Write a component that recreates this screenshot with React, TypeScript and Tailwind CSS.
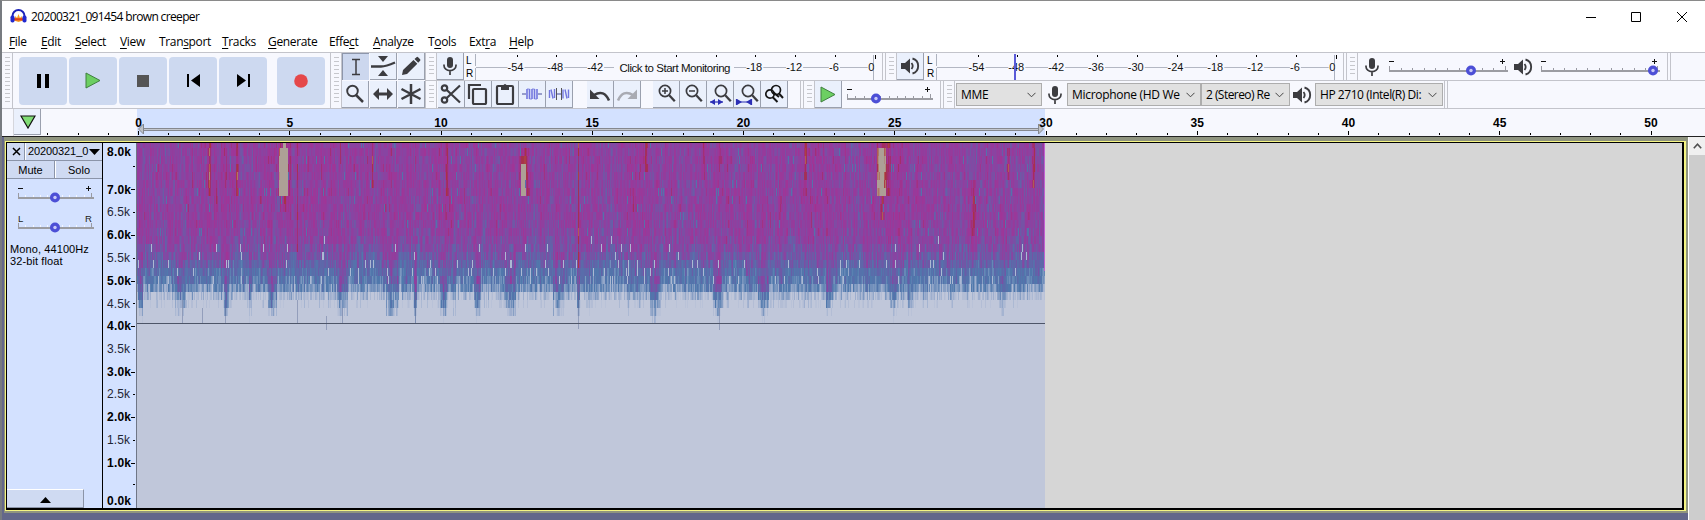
import React from "react";

const SEGOE = "font-['Open_Sans','Noto_Sans',sans-serif]";
const ARIAL = "font-['Liberation_Sans',Arial,sans-serif]";

const INK = "#3c3c40";

/* ---------- small parts ---------- */

function Grip({ className = "h-7" }: { className?: string }) {
  return (
    <div className={`flex w-[11px] shrink-0 justify-center border-r border-[#c3c4cb] py-[4px] ${className}`}>
      <div className="h-full w-[5px] bg-[repeating-linear-gradient(to_bottom,#c6c7cc_0px,#c6c7cc_1px,transparent_1px,transparent_4px)]" />
    </div>
  );
}

function ToolButton({ children, pressed = false, w = "w-[27px]" }: { children: React.ReactNode; pressed?: boolean; w?: string }) {
  return (
    <button
      className={`flex h-[27px] shrink-0 items-center justify-center ${w} ${
        pressed
          ? "border-t border-l border-[#8d96ab] bg-[#ccd7ee]"
          : "border-r border-b border-r-[#9aa0ae] border-b-[#9aa0ae] bg-[#eaf0fc]"
      }`}
    >
      {children}
    </button>
  );
}

function BigButton({ children, className = "" }: { children: React.ReactNode; className?: string }) {
  return (
    <button className={`flex h-12 w-12 shrink-0 items-center justify-center rounded-[4px] bg-[#cdd9f0] ${className}`}>{children}</button>
  );
}

function Mic() {
  return (
    <svg width="16" height="20" viewBox="0 0 16 20" fill="none" stroke={INK}>
      <rect x="5" y="1" width="6" height="11" rx="3" fill={INK} stroke="none" />
      <path d="M2 8.5v1a6 5.2 0 0 0 12 0v-1M8 15v4" strokeWidth="1.7" />
    </svg>
  );
}

function Speaker() {
  return (
    <svg width="20" height="20" viewBox="0 0 20 20" fill="none" stroke={INK}>
      <path d="M1 7h4l5-4.5v15L5 13H1z" fill={INK} stroke="none" />
      <path d="M11.5 7q2.4 3 0 6" strokeWidth="1.8" />
      <path d="M12.5 2.5a7.8 7.8 0 0 1 0 15" strokeWidth="1.9" />
    </svg>
  );
}

function Knob({ x, y }: { x: number; y: number }) {
  return (
    <g>
      <circle cx={x} cy={y} r="5" fill="#4c4fd6" />
      <circle cx={x} cy={y} r="1.7" fill="#c8c9f8" />
    </g>
  );
}

function Slider({ w, pos, ticks, left = "-", right = "+", light = false }: { w: number; pos: number; ticks: number; left?: string; right?: string; light?: boolean }) {
  const step = (w - 3) / ticks;
  return (
    <svg width={w} height="28" className={ARIAL}>
      {left === "-" ? <path d="M0 8.5h5" stroke="#111" /> : <text x="0" y="12" fontSize="9.5" fill="#222">{left}</text>}
      {right === "+" ? (
        <path d={`M${w - 8} 8.5h5M${w - 5.5} 6v5`} stroke="#111" />
      ) : (
        <text x={w - 9} y="12" fontSize="9.5" fill="#222">{right}</text>
      )}
      {Array.from({ length: ticks + 1 }, (_, i) => {
        const end = i === 0 || i === ticks;
        return <rect key={i} x={Math.round(i * step)} y={end ? 13 : 15} width="1" height={end ? 5 : 3} fill={light && !end ? "#f4f7ff" : "#999aa2"} />;
      })}
      <rect x="0" y="17" width={w} height="2" fill="#9b9ca2" />
      <Knob x={pos} y={17.5} />
    </svg>
  );
}

function LR() {
  return (
    <div className={`flex h-7 w-[9px] shrink-0 flex-col justify-between py-px text-[10px] leading-[13px] text-black ${ARIAL}`}>
      <span>L</span>
      <span>R</span>
    </div>
  );
}

function Meter({ message, peak }: { message?: string; peak?: number }) {
  const vals = [-54, -48, -42, -36, -30, -24, -18, -12, -6, 0];
  const hidden = (v: number) => !!message && v > -42 && v < -18;
  const xs = vals.map((_, i) => 41.5 + i * 39.8);
  const segs: string[] = [];
  let start = 1;
  xs.forEach((x, i) => {
    if (hidden(vals[i])) return;
    const half = i === 9 ? 7 : i === 8 ? 6 : 9;
    if (message && vals[i] === -18) start = 259;
    segs.push(`M${start} 14.5H${x - half}`);
    start = x + half - 1;
    if (message && vals[i] === -42) segs.push(`M${start} 14.5H139`);
  });
  return (
    <svg width="404" height="28" className={`shrink-0 ${ARIAL}`}>
      <path d="M.5 1v12M.5 15v12M398.5 2v11M398.5 15v12" stroke="#aeb3bf" />
      <path d={segs.join("")} stroke="#b3b7c3" />
      {vals.map((v, i) => (
        <g key={v}>
          <rect x={Math.round(xs[i])} y="2" width="1" height={v === 0 ? 4 : 2} fill="#000" />
          {!hidden(v) && (
            <text x={v === 0 ? xs[i] - 3.5 : xs[i] - 1} y="18" fontSize="11" textAnchor="middle" fill="#111">{v}</text>
          )}
        </g>
      ))}
      {message && (
        <text x="200" y="19" fontSize="11.5" textAnchor="middle" textLength="111" fill="#111">{message}</text>
      )}
      {peak !== undefined && <rect x={peak} y="1" width="2" height="26" fill="#5a5ad8" />}
    </svg>
  );
}

function Combo({ label, className }: { label: string; className: string }) {
  return (
    <div className={`flex h-[23px] shrink-0 items-center justify-between border border-[#adadad] bg-[#e1e1e1] pl-[4px] pr-[5px] text-black ${SEGOE} ${className}`}>
      <span className="whitespace-nowrap">{label}</span>
      <svg width="9" height="6" viewBox="0 0 9 6" className="shrink-0">
        <path d="M.5.8l4 4 4-4" fill="none" stroke="#444" />
      </svg>
    </div>
  );
}

function Lens({ children, cx = 11, cy = 9 }: { children?: React.ReactNode; cx?: number; cy?: number }) {
  return (
    <svg width="24" height="24" viewBox="0 0 24 24" fill="none" stroke={INK}>
      <circle cx={cx} cy={cy} r="5.6" strokeWidth="1.7" />
      <path d={`M${cx + 4.2} ${cy + 4.2}l5.6 6`} strokeWidth="2.3" />
      {children}
    </svg>
  );
}

const End = () => <div className="h-7 w-[4px] shrink-0 border-x border-[#c3c4cb]" />;

/* ---------- chrome ---------- */

const menus: [string, number, string][] = [
  ["File", 0, "w-8"],
  ["Edit", 0, "w-[34px]"],
  ["Select", 0, "w-[45px]"],
  ["View", 0, "w-[39px]"],
  ["Transport", 4, "w-[63px]"],
  ["Tracks", 0, "w-[46px]"],
  ["Generate", 0, "w-[61px]"],
  ["Effect", 4, "w-11"],
  ["Analyze", 0, "w-[55px]"],
  ["Tools", 1, "w-[41px]"],
  ["Extra", 3, "w-10"],
  ["Help", 0, "w-10"],
];

function TitleBar() {
  return (
    <div className="flex h-[31px] shrink-0 items-center bg-white pl-[8px]">
      <svg width="17" height="17" viewBox="0 0 17 17">
        <path d="M4 12.5L5.5 8 7 10l1.5-4L10 10l1.5-2L13 12.5 8.5 14z" fill="#f5a023" />
        <path d="M4 11.3h9" stroke="#e2401c" strokeWidth="2.2" />
        <path d="M2.5 10V8a6 6 0 0 1 12 0v2" fill="none" stroke="#1b22b8" strokeWidth="2" />
        <rect x="0.5" y="7.5" width="4" height="7" rx="1.8" fill="#2229cf" />
        <rect x="12.5" y="7.5" width="4" height="7" rx="1.8" fill="#2229cf" />
      </svg>
      <span className={`ml-[4px] whitespace-nowrap text-[12px] tracking-[-0.64px] text-black ${SEGOE}`}>20200321_091454 brown creeper</span>
      <svg width="120" height="14" viewBox="0 0 120 14" className="ml-auto mr-[5px]" fill="none" stroke="#000">
        <path d="M6 7.5h10M51.5 2.5h9v9h-9zM97 2l10 10M107 2L97 12" />
      </svg>
    </div>
  );
}

function MenuBar() {
  return (
    <div className={`flex h-5 shrink-0 items-center bg-white pl-[7px] text-[12px] leading-5 tracking-[-0.35px] text-black ${SEGOE}`}>
      {menus.map(([m, u, w]) => (
        <span key={m} className={`shrink-0 ${w}`}>
          {m.slice(0, u)}
          <span className="underline underline-offset-2">{m[u]}</span>
          {m.slice(u + 1)}
        </span>
      ))}
    </div>
  );
}

function Toolbars() {
  return (
    <div className="flex h-[57px] shrink-0 border-y border-[#c3c4cb] bg-[#f7f8fe]">
      <Grip className="h-[55px]" />
      <div className="flex items-center gap-[2px] pl-[6px]">
        <BigButton>
          <svg width="14" height="14"><path d="M1 0h4v14H1zM9 0h4v14H9z" /></svg>
        </BigButton>
        <BigButton>
          <svg width="16" height="17"><path d="M1 1l14 7.5L1 16z" fill="#6ccf62" stroke="#3f7f3f" /></svg>
        </BigButton>
        <BigButton>
          <svg width="12" height="12"><path d="M0 0h12v12H0z" fill="#555" /></svg>
        </BigButton>
        <BigButton>
          <svg width="13" height="13"><path d="M0 0h2v13H0zM13 0v13L4 6.5z" /></svg>
        </BigButton>
        <BigButton>
          <svg width="13" height="13"><path d="M11 0h2v13h-2zM0 0v13l9-6.5z" /></svg>
        </BigButton>
        <BigButton className="ml-2">
          <svg width="14" height="14"><circle cx="7" cy="7" r="6.8" fill="#e5484a" /></svg>
        </BigButton>
      </div>
      <div className="ml-[5px] flex border-l border-[#c3c4cb]">
        <Grip className="h-[55px]" />
        <div className="grid grid-cols-3 gap-px">
          <ToolButton pressed>
            <svg width="10" height="18" fill="none" stroke={INK} strokeWidth="1.5"><path d="M1 1.5h8M1 16.5h8M5 1v16" /></svg>
          </ToolButton>
          <ToolButton>
            <svg width="26" height="22" fill={INK} className="shrink-0">
              <path d="M8 1h10l-5 6zM8 21h10l-5-6z" />
              <path d="M1 11.5h10q5 0 14-4" fill="none" stroke={INK} strokeWidth="2.4" />
            </svg>
          </ToolButton>
          <ToolButton>
            <svg width="20" height="20" fill={INK}><path d="M1 19l1-5L12.5 4l3.800 3.800L6 18zM13.500 3l2-1.800q.8-.7 1.600 0l2 2q.7.800 0 1.600l-1.900 2z" /></svg>
          </ToolButton>
          <ToolButton>
            <svg width="20" height="20" fill="none" stroke={INK}><circle cx="7.5" cy="7" r="5.3" strokeWidth="1.9" /><path d="M11 11l7 7" strokeWidth="2.5" /></svg>
          </ToolButton>
          <ToolButton>
            <svg width="22" height="14" fill={INK}><path d="M1 7l6-6v4.600h8V1l6 6-6 6V8.400H7V13z" /></svg>
          </ToolButton>
          <ToolButton>
            <svg width="22" height="22" stroke={INK} strokeWidth="2.5"><path d="M11 1v20M1.500 6l19 10M20.500 6l-19 10" /></svg>
          </ToolButton>
        </div>
      </div>
      <div className="flex flex-1 flex-col border-l border-[#c3c4cb]">
        <div className="flex h-7 border-b border-[#c3c4cb]">
          <Grip className="h-7" />
          <ToolButton><Mic /></ToolButton>
          <div className="w-[2px]" />
          <LR />
          <Meter message="Click to Start Monitoring" />
          <div className="w-[3px]" />
          <End />
          <Grip className="h-7" />
          <ToolButton><Speaker /></ToolButton>
          <div className="w-[3px]" />
          <LR />
          <Meter peak={78} />
          <div className="w-[3px]" />
          <End />
          <Grip className="h-7" />
          <div className="flex items-center pl-[6px]"><Mic /></div>
          <div className="ml-[9px] flex shrink-0"><Slider w={119} pos={82} ticks={10} /></div>
          <div className="ml-[5px] flex items-center"><Speaker /></div>
          <div className="ml-[8px] flex shrink-0"><Slider w={119} pos={112} ticks={10} /></div>
          <div className="w-[7px]" />
          <End />
        </div>
        <div className="flex h-[27px]">
          <Grip className="h-[27px]" />
          <div className="w-px" />
          <ToolButton>
            <svg width="22" height="22" fill="none" stroke={INK} strokeWidth="2.2">
              <circle cx="4.5" cy="5" r="2.7" /><circle cx="4.5" cy="17" r="2.7" /><path d="M6.500 6.800L20 19.500M6.500 15.200L20 2.500" />
            </svg>
          </ToolButton>
          <ToolButton>
            <svg width="22" height="22" fill="none" stroke={INK} strokeWidth="2.2"><path d="M2 16V2h12" /><rect x="6" y="6" width="13" height="15" rx="1" /></svg>
          </ToolButton>
          <ToolButton>
            <svg width="20" height="22" fill="none" stroke={INK} strokeWidth="2.2"><rect x="2" y="3" width="16" height="18" rx="1" /><path d="M6 3h8v4H6z" fill={INK} stroke="none" /><circle cx="10" cy="2.500" r="1.500" fill={INK} stroke="none" /></svg>
          </ToolButton>
          <ToolButton>
            <svg width="20" height="16" fill="none" stroke="#7277de">
              <path d="M0 8h4M16 8h4" stroke="#444a9a" />
              <path d="M5 3v10M15 3v10" strokeWidth="1.6" />
              <path d="M7.500 3v10M10 3v10M12.500 3v10" strokeWidth="1.600" />
              <path d="M5 3h2.500M7.500 13H10M10 3h2.500M12.500 13H15" strokeWidth=".8" />
            </svg>
          </ToolButton>
          <ToolButton>
            <svg width="22" height="16" fill="none" stroke="#7277de">
              <path d="M8 8h6" stroke="#444a9a" />
              <path d="M1.500 12V4M3 3.500l2 9M6.500 3v9M15 3.500v9M17 3.500l2 9M20.500 3.500V12" strokeWidth="1.400" />
              <path d="M8.500 2v12M13.500 2v12" stroke="#555" />
            </svg>
          </ToolButton>
          <div className="w-[14px]" />
          <ToolButton>
            <svg width="22" height="16"><path d="M20 14.500Q15 3 5 9" fill="none" stroke={INK} strokeWidth="2.600" /><path d="M1 3.500v9.500h9.500z" fill={INK} /></svg>
          </ToolButton>
          <ToolButton>
            <svg width="22" height="16"><path d="M2 14.500Q7 3 17 9" fill="none" stroke="#a9abb3" strokeWidth="2.600" /><path d="M21 3.500v9.500h-9.500z" fill="#a9abb3" /></svg>
          </ToolButton>
          <div className="w-[12px]" />
          <ToolButton><Lens><path d="M8 9h6M11 6v6" strokeWidth="1.500" /></Lens></ToolButton>
          <ToolButton><Lens><path d="M8 9h6" strokeWidth="1.500" /></Lens></ToolButton>
          <ToolButton>
            <Lens cx={13}><path d="M2 20h13" stroke="#2c2fb5" strokeWidth="1.200" /><path d="M2 20l5-3v6zM15 20l-5-3v6z" fill="#2c2fb5" stroke="none" /></Lens>
          </ToolButton>
          <ToolButton>
            <Lens cx={13}><path d="M1 20h16M1.500 17v6M16.500 17v6" stroke="#2c2fb5" strokeWidth="1.200" /><path d="M7 20l-5-3v6zM11 20l5-3v6z" fill="#2c2fb5" stroke="none" /></Lens>
          </ToolButton>
          <ToolButton>
            <svg width="22" height="22" viewBox="0 0 22 22" fill="none" stroke="#151515" strokeWidth="1.700"><circle cx="7" cy="11" r="4.200" /><circle cx="13" cy="7" r="4.500" /><path d="M9.500 14l5 5M16 10.500l4 4.500M10 9l6 5" strokeWidth="2" /></svg>
          </ToolButton>
          <div className="w-[12px]" />
          <End />
          <Grip className="h-[27px]" />
          <ToolButton>
            <svg width="16" height="17"><path d="M1 1l14 7.500L1 16z" fill="#6ccf62" stroke="#3f7f3f" /></svg>
          </ToolButton>
          <div className="ml-[5px] flex shrink-0"><Slider w={86} pos={29} ticks={10} /></div>
          <div className="w-[7px]" />
          <End />
          <Grip className="h-[27px]" />
          <div className="ml-px flex items-center">
            <Combo label="MME" className="w-[86px] text-[12px] tracking-[-0.3px]" />
            <div className="ml-[5px] mr-[4px]"><Mic /></div>
            <Combo label="Microphone (HD We" className="w-[134px] text-[12px] tracking-[-0.3px]" />
            <Combo label="2 (Stereo) Re" className="w-[89px] pl-[3px] text-[12px] tracking-[-0.55px]" />
            <div className="ml-[2px] mr-[3px]"><Speaker /></div>
            <Combo label="HP 2710 (Intel(R) Di:" className="w-[128px] text-[12px] tracking-[-0.45px]" />
          </div>
          <div className="w-px" />
          <End />
        </div>
      </div>
    </div>
  );
}

function Timeline() {
  const unit = 30.25;
  return (
    <div className="flex h-7 shrink-0 border-b border-[#222] bg-[#f7f8fe]">
      <div className="w-[12px] shrink-0 border-r border-[#d5d6dc]" />
      <div className="flex h-[26px] w-[27px] shrink-0 items-center justify-center border-r border-b border-[#9aa0ae] bg-[#eaf0fc] pl-[2px]">
        <svg width="16" height="14"><path d="M1 1h14L8 13z" fill="#7fdc74" stroke="#111" strokeWidth="1.200" /></svg>
      </div>
      <svg width="1662" height="27" viewBox="41 109 1662 27" className={`shrink-0 ${ARIAL}`}>
        <rect x="137" y="109" width="908" height="27" fill="#d3e1ff" />
        {Array.from({ length: 54 }, (_, k) => k - 3).map((s) => (
          <rect key={s} x={Math.round(138 + s * unit)} y={s % 5 ? 133 : 131} width="1" height={s % 5 ? 2 : 4} fill="#000" />
        ))}
        <path d="M143 128.500h897M143 130.500h897" stroke="#85888f" />
        <path d="M143 129.500h897" stroke="#c3c7cf" />
        <path d="M143.500 124v10l-5-5z" fill="#bfc2c8" stroke="#85888f" />
        <path d="M1038.500 124v10l5-5z" fill="#bfc2c8" stroke="#85888f" />
        {[0, 5, 10, 15, 20, 25, 30, 35, 40, 45, 50].map((n) => (
          <text key={n} x={138.5 + n * unit} y="127" fontSize="12" fontWeight="bold" textAnchor="middle">{n}</text>
        ))}
      </svg>
    </div>
  );
}

/* ---------- spectrogram ---------- */

type RGB = [number, number, number];
const stops: [number, RGB][] = [
  [0, [192, 199, 218]],
  [0.12, [160, 176, 207]],
  [0.3, [80, 120, 172]],
  [0.45, [98, 98, 168]],
  [0.6, [136, 68, 162]],
  [0.76, [160, 52, 150]],
  [0.87, [162, 46, 96]],
  [0.94, [170, 52, 62]],
  [0.99, [176, 110, 92]],
  [1.06, [172, 168, 160]],
];

function shade(v: number) {
  for (let i = 1; i < stops.length; i++) {
    if (v <= stops[i][0]) {
      const [a, ca] = stops[i - 1];
      const [b, cb] = stops[i];
      const t = (v - a) / (b - a);
      return `rgb(${ca.map((c, k) => Math.round(c + (cb[k] - c) * t)).join(",")})`;
    }
  }
  return "rgb(172,168,160)";
}

// Bursts of low band energy: centre, half width, strength
const bursts: [number, number, number][] = [
  [140, 2, 0.3], [180, 5, 0.26], [226, 2, 0.3], [250, 1, 0.25], [272, 4, 0.3], [342, 5, 0.3], [392, 6, 0.28], [415, 1, 0.4],
  [443, 3, 0.28], [454, 1, 0.26], [477, 3, 0.26], [510, 5, 0.3], [558, 5, 0.3], [578, 1, 0.35], [655, 5, 0.31], [717, 4, 0.31],
  [763, 5, 0.3], [829, 3, 0.28], [893, 3, 0.18], [910, 2, 0.18], [1002, 3, 0.2],
];
// Calls in the upper band: centre, half width, top, bottom, strength
const calls: [number, number, number, number, number][] = [
  [209, 1, 143, 195, 0.24], [237, 1, 143, 190, 0.2], [284, 6, 143, 192, 0.24], [283, 4, 151, 189, 0.5], [284, 1, 143, 150, 0.4],
  [284, 4, 192, 212, 0.18], [372, 1, 143, 185, 0.22], [447, 1, 143, 190, 0.2], [450, 3, 200, 236, 0.1], [525, 6, 151, 195, 0.22],
  [523, 2, 165, 189, 0.5], [578, 0, 143, 268, 0.24], [297, 0, 143, 250, 0.2], [646, 1, 143, 166, 0.22], [703, 1, 143, 180, 0.14],
  [805, 1, 143, 180, 0.24], [883, 7, 143, 190, 0.23], [881, 4, 151, 189, 0.32], [882, 2, 190, 214, 0.22], [972, 4, 180, 245, 0.14],
  [974, 1, 180, 225, 0.1], [1033, 1, 143, 182, 0.24], [1008, 1, 151, 175, 0.18], [616, 4, 185, 210, 0.09],
];

function rowMean(y: number) {
  if (y < 220) return 0.64;
  const table = [0.63, 0.62, 0.6, 0.56, 0.51, 0.45, 0.36, 0.3, 0.22, 0.07, -0.04, -0.15, -0.3];
  return table[Math.min(table.length - 1, Math.floor((y - 220) / 8))];
}

function buildSpectrum() {
  let s = 91454;
  const rnd = () => {
    s = (Math.imul(s, 1664525) + 1013904223) >>> 0;
    return s / 4294967296;
  };
  const rows: [number, number, number][] = [];
  for (let y = 140; y <= 316; y += 8) rows.push([Math.max(143, y), Math.min(y + 8, 323), rowMean(y)]);
  const map = new Map<number, string>();
  let slow = 0;
  const prev = rows.map(() => 0);
  for (let x = 137; x < 1045; x++) {
    slow = slow * 0.9 + (rnd() - 0.5) * 0.035;
    const col = (rnd() - 0.5) * 0.08;
    let low = 0;
    for (const [c, h, k] of bursts) {
      const d = Math.abs(x - c);
      if (d <= h) low = Math.max(low, k * (1 - (d / (h + 1)) * 0.35));
    }
    let above = 0;
    rows.forEach(([y, y2, mean], r) => {
      const f = (rnd() + rnd() - 1) * 0.17;
      prev[r] = prev[r] * 0.3 + f * 0.8 + above * 0.3;
      above = f;
      let v = mean + slow + col + prev[r];
      if (y >= 252) v += low * (y < 276 ? 0.4 : 0.85);
      for (const [c, h, t, b, k] of calls) {
        const d = Math.abs(x - c);
        if (d <= h && y >= t - 4 && y < b) v += k * (1 - (d / (h + 1)) * 0.6);
      }
      const pale = y > 228 && y < 244 ? 0.008 : y < 260 ? 0.015 : 0.04;
      if (y > 228 && y < 284 && rnd() < pale) v = 0.08;
      if (y <= 228 && rnd() < 0.012) v = 0.36;
      const q = Math.round(Math.max(0, Math.min(1.06, v)) * 40);
      if (q === 0) return;
      map.set(q, (map.get(q) ?? "") + `M${x} ${y}h1v${y2 - y}h-1z`);
    });
  }
  return [...map.entries()];
}

const spectrum = buildSpectrum();

function Spectrogram() {
  return (
    <svg width="909" height="365" viewBox="136 143 909 365" shapeRendering="crispEdges" className="shrink-0">
      <rect x="136" y="143" width="909" height="365" fill="#c0c7da" />
      {spectrum.map(([q, d]) => (
        <path key={q} d={d} fill={shade(q / 40)} />
      ))}
      <path d="M182.500 300v23M202.500 308v15M225.500 308v15M297.500 300v23M326.500 316v14M415.500 292v31M578.500 268v61M719.500 308v22M342.500 308v15" stroke="#5d6d95" strokeOpacity=".45" />
      <rect x="136" y="143" width="1" height="365" fill="#6f7686" />
      <rect x="137" y="323" width="908" height="1" fill="#4d5568" />
      <rect x="1044" y="143" width="1" height="128" fill="#c25fd0" />
    </svg>
  );
}

const freqs: [string, number, boolean][] = [
  ["8.0k", 151, true], ["7.0k", 189, true], ["6.5k", 211.5, false], ["6.0k", 234.5, true], ["5.5k", 257.5, false],
  ["5.0k", 280.5, true], ["4.5k", 303, false], ["4.0k", 325.5, true], ["3.5k", 348.5, false], ["3.0k", 371.5, true],
  ["2.5k", 393.5, false], ["2.0k", 416.5, true], ["1.5k", 439.5, false], ["1.0k", 462.5, true], ["0.0k", 500, true],
];

function FrequencyAxis() {
  return (
    <svg width="33" height="365" viewBox="103 143 33 365" className={`shrink-0 bg-[#d3e1ff] ${ARIAL}`}>
      {freqs.map(([t, y, b]) => (
        <g key={t}>
          <text x="107" y={y + 4.5} fontSize="12" fontWeight={b ? "bold" : "normal"} textLength={b ? 24 : 23} fill={b ? "#000" : "#1f2534"}>{t}</text>
          {y > 160 && y < 490 && <rect x={b ? 131 : 133} y={Math.round(y)} width={b ? 4 : 2} height="1" fill="#000" />}
        </g>
      ))}
      <path d="M133 166.500h2M133 484.500h2" stroke="#000" />
    </svg>
  );
}

function TrackPanel() {
  return (
    <div className={`flex w-24 shrink-0 flex-col border-r border-black bg-[#d3e1ff] text-[12px] text-black ${ARIAL}`}>
      <div className="flex h-[18px] border-b border-[#8b94a8] bg-[#cfdaf2]">
        <div className="flex w-[18px] items-center justify-center border-r border-[#8b94a8] pl-px">
          <svg width="9" height="9" stroke="#000" strokeWidth="1.500"><path d="M1 1l7 7M8 1L1 8" /></svg>
        </div>
        <div className="flex flex-1 items-center justify-between border-l border-white pl-[2px] pr-[2px]">
          <span className="text-[11px] tracking-[-0.1px]">20200321_0</span>
          <svg width="11" height="6" className="shrink-0"><path d="M0 0h11L5.500 6z" /></svg>
        </div>
      </div>
      <div className="flex h-[18px] border-b border-[#8b94a8] bg-[#cfdaf2] text-center text-[11px] leading-[18px]">
        <span className="w-12 border-r border-[#8b94a8]">Mute</span>
        <span className="flex-1 border-l border-white">Solo</span>
      </div>
      <div className="mt-[1px] ml-[11px] h-[30px]"><Slider w={76} pos={37} ticks={10} light /></div>
      <div className="ml-[11px] h-[34px]"><Slider w={76} pos={37} ticks={10} left="L" right="R" light /></div>
      <div className="ml-[3px] -mt-[1px] text-[11px] leading-3 tracking-[0.1px]">
        <div>Mono, 44100Hz</div>
        <div>32-bit float</div>
      </div>
      <div className="mt-auto flex h-[19px] w-[77px] items-center justify-center border-t border-r border-b border-t-white border-r-[#8b94a8] border-b-[#8b94a8] bg-[#cfdaf2]">
        <svg width="11" height="6" className="mt-[2px]"><path d="M0 6h11L5.500 0z" /></svg>
      </div>
    </div>
  );
}

export default function App() {
  return (
    <div className="flex h-[520px] w-[1705px] flex-col overflow-hidden border-t border-l-2 border-t-[#8a8a8a] border-l-[#777b80] bg-white">
      <TitleBar />
      <MenuBar />
      <Toolbars />
      <Timeline />
      <div className="flex min-h-0 flex-1">
        <div className="flex w-[1686px] shrink-0 flex-col bg-[#63678a]">
          <div className="ml-[2px] border-t-4 border-l border-r-2 border-b-2 border-[#8f947f]">
            <div className="border border-[#f5f583] border-r-2">
              <div className="flex h-[368px] border-t border-l border-r-2 border-b-2 border-black bg-[#d6d6d6]">
                <TrackPanel />
                <FrequencyAxis />
                <Spectrogram />
              </div>
            </div>
          </div>
        </div>
        <div className="flex flex-1 flex-col items-center border-l border-white bg-[#cdcdcd]">
          <div className="flex h-[18px] w-full items-center justify-center bg-[#f0f0f0]">
            <svg width="9" height="6"><path d="M.8 5.200l3.700-4 3.700 4" fill="none" stroke="#505050" strokeWidth="1.600" /></svg>
          </div>
        </div>
      </div>
    </div>
  );
}
